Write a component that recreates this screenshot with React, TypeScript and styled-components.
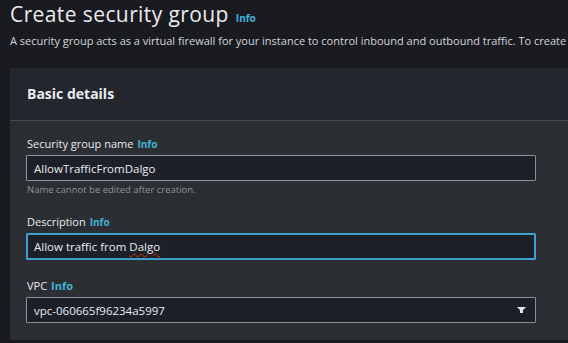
import React from "react";
import styled, { createGlobalStyle } from "styled-components";

const Global = createGlobalStyle`
  html, body { margin: 0; padding: 0; background: #1a1b20; overflow: hidden; }
  body { font-family: "Open Sans", "Noto Sans", sans-serif; color: #e9ebed; }
  * { box-sizing: border-box; }
`;

const Page = styled.div`
  width: 568px;
  height: 343px;
  overflow: hidden;
  padding: 0 0 0 10px;
`;

const TitleRow = styled.div`
  display: flex;
  align-items: baseline;
  gap: 7px;
  margin-top: 2px;
  white-space: nowrap;
`;

const Title = styled.h1`
  margin: 0;
  font-size: 21px;
  line-height: 24px;
  font-weight: 400;
  letter-spacing: 0.4px;
  color: #e9ebed;
`;

const InfoLink = styled.span<{ $size?: number }>`
  font-size: ${(p) => p.$size ?? 10}px;
  font-weight: 700;
  color: #44b3d8;
`;

const Subtitle = styled.p`
  margin: 8px 0 0;
  font-size: 11px;
  line-height: 14px;
  white-space: nowrap;
  color: #d1d5db;
`;

const Panel = styled.section`
  margin-top: 20px;
  width: 600px;
  background: #2b2e33;
`;

const PanelHeader = styled.div`
  height: 53px;
  background: #23262d;
  border-bottom: 1px solid #454a51;
  padding: 0 17px 1px;
  display: flex;
  align-items: center;
`;

const PanelTitle = styled.h2`
  margin: 0;
  font-size: 14px;
  font-weight: 700;
  color: #e9ebed;
`;

const PanelBody = styled.div`
  padding: 16px 16px 17px 16px;
  display: flex;
  flex-direction: column;
  gap: 19px;
`;

const Field = styled.div`
  display: flex;
  flex-direction: column;
`;

const Label = styled.div`
  display: flex;
  align-items: baseline;
  gap: 4px;
  padding-left: 1px;
  font-size: 11px;
  line-height: 14px;
  color: #e9ebed;
  margin-bottom: 4px;
`;

const Input = styled.div<{ $focused?: boolean }>`
  width: 510px;
  height: ${(p) => (p.$focused ? 27 : 26)}px;
  background: #1d2029;
  border: 1px solid ${(p) => (p.$focused ? "#3f9fcf" : "#8b9196")};
  box-shadow: ${(p) => (p.$focused ? "inset 0 0 0 1px #3f9fcf" : "none")};
  border-radius: 1px;
  display: flex;
  align-items: center;
  justify-content: space-between;
  padding: 0 9px 0 7px;
  font-size: 11.5px;
  color: #e9ebed;
`;

const Squiggle = styled.span`
  text-decoration: underline wavy #d13212;
  text-decoration-thickness: 1px;
  text-underline-offset: 2px;
`;

const Hint = styled.div`
  margin-top: 3px;
  padding-left: 1px;
  font-size: 9.5px;
  line-height: 12px;
  color: #8d949b;
`;

const Caret = () => (
  <svg width="9" height="6" viewBox="0 0 9 6" aria-hidden="true">
    <path d="M0 0 H9 L6 3 V6 H3 V3 Z" fill="#e0e3e6" />
  </svg>
);

export default function App() {
  return (
    <Page>
      <Global />
      <TitleRow>
        <Title>Create security group</Title>
        <InfoLink>Info</InfoLink>
      </TitleRow>
      <Subtitle>
        A security group acts as a virtual firewall for your instance to control inbound and outbound traffic. To create
      </Subtitle>
      <Panel>
        <PanelHeader>
          <PanelTitle>Basic details</PanelTitle>
        </PanelHeader>
        <PanelBody>
          <Field>
            <Label>
              Security group name <InfoLink>Info</InfoLink>
            </Label>
            <Input>AllowTrafficFromDalgo</Input>
            <Hint>Name cannot be edited after creation.</Hint>
          </Field>
          <Field>
            <Label>
              Description <InfoLink>Info</InfoLink>
            </Label>
            <Input $focused>
              <span>
                Allow traffic from <Squiggle>Dalgo</Squiggle>
              </span>
            </Input>
          </Field>
          <Field>
            <Label>
              VPC <InfoLink $size={11}>Info</InfoLink>
            </Label>
            <Input>
              <span>vpc-060665f96234a5997</span>
              <Caret />
            </Input>
          </Field>
        </PanelBody>
      </Panel>
    </Page>
  );
}
